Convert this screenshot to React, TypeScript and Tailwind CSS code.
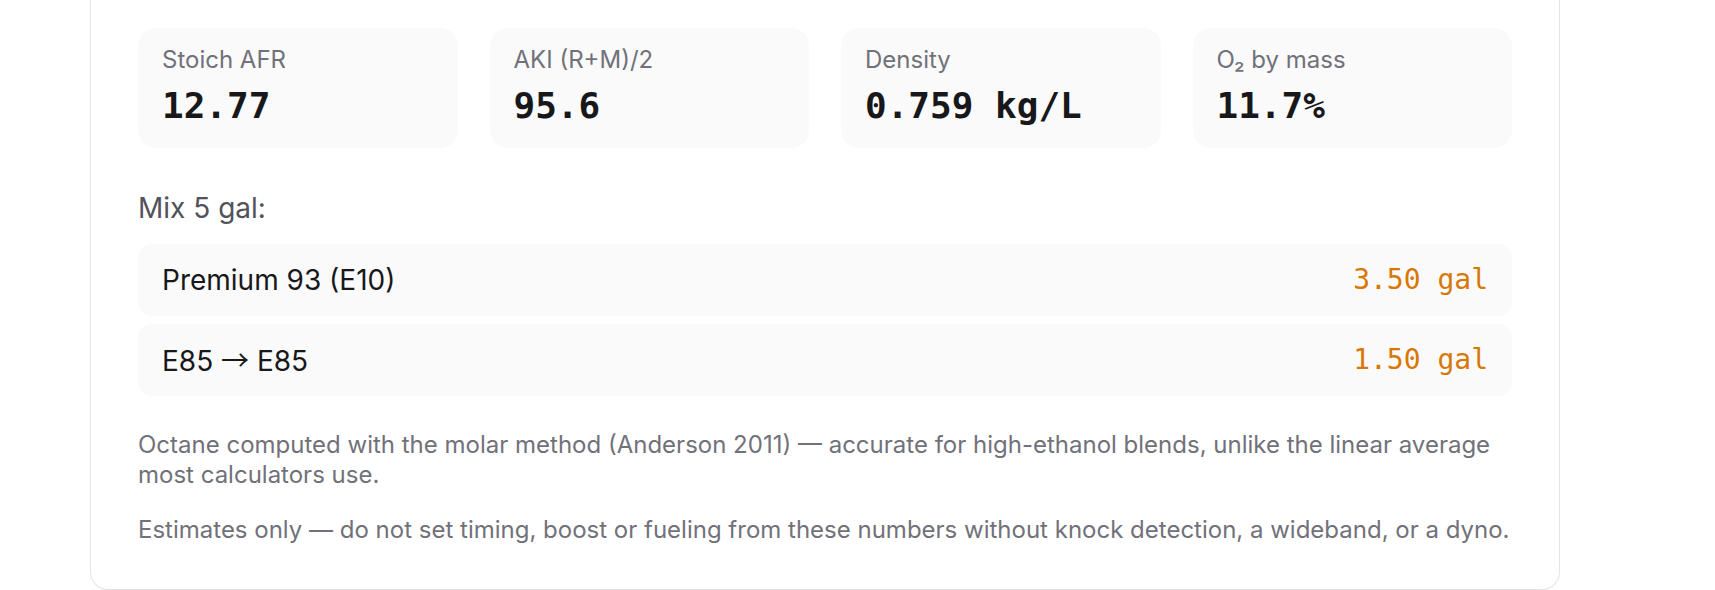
import React from "react";

const stats = [
  { label: "Stoich AFR", value: "12.77" },
  { label: "AKI (R+M)/2", value: "95.6" },
  { label: "Density", value: "0.759 kg/L" },
  { label: "O₂ by mass", value: "11.7%" },
];

const mix = [
  { from: "Premium 93 (E10)", to: null as string | null, amount: "3.50 gal" },
  { from: "E85", to: "E85", amount: "1.50 gal" },
];

const sans = { fontFamily: "Inter, 'Noto Sans', sans-serif" };
const mono = { fontFamily: "'DejaVu Sans Mono', 'Liberation Mono', monospace" };
const arrow = { fontFamily: "'Noto Sans CJK JP', 'DejaVu Sans', sans-serif" };

export default function App() {
  return (
    <div className="w-[1715px] h-[590px] overflow-hidden bg-white" style={sans}>
      <div className="ml-[90px] w-[1470px] border-x-[1.5px] border-b-[1.5px] border-[#e4e4e7] rounded-b-[18px] px-[47px] pt-[28px] pb-[44px]">
        <div className="grid grid-cols-4 gap-[32px]">
          {stats.map((s) => (
            <div key={s.label} className="h-[120px] rounded-[18px] bg-[#fafafa] px-[24px] pt-[17px]">
              <div className="text-[24px] leading-[30px] text-[#71717a]">{s.label}</div>
              <div className="mt-[7px] text-[36px] leading-[48px] font-bold text-[#18181b]" style={mono}>
                {s.value}
              </div>
            </div>
          ))}
        </div>

        <div className="mt-[39px] mb-[15px] text-[28px] leading-[42px] text-[#52525b]">Mix 5 gal:</div>

        <div className="flex flex-col gap-[8px]">
          {mix.map((m) => (
            <div key={m.amount} className="h-[72px] flex items-center justify-between rounded-[14px] bg-[#fafafa] px-[24px]">
              <span className="text-[28px] leading-[36px] text-[#18181b]">
                {m.from}
                {m.to && (
                  <>
                    {" "}
                    <span style={arrow}>→</span> {m.to}
                  </>
                )}
              </span>
              <span className="text-[28px] leading-[36px] text-[#d97706]" style={mono}>
                {m.amount}
              </span>
            </div>
          ))}
        </div>

        <p className="mt-[34px] text-[24px] leading-[30px] text-[#71717a]">
          Octane computed with the molar method (Anderson 2011) — accurate for high-ethanol blends, unlike the linear
          average most calculators use.
        </p>
        <p className="mt-[25px] text-[24px] leading-[30px] text-[#71717a]">
          Estimates only — do not set timing, boost or fueling from these numbers without knock detection, a wideband, or
          a dyno.
        </p>
      </div>
    </div>
  );
}
